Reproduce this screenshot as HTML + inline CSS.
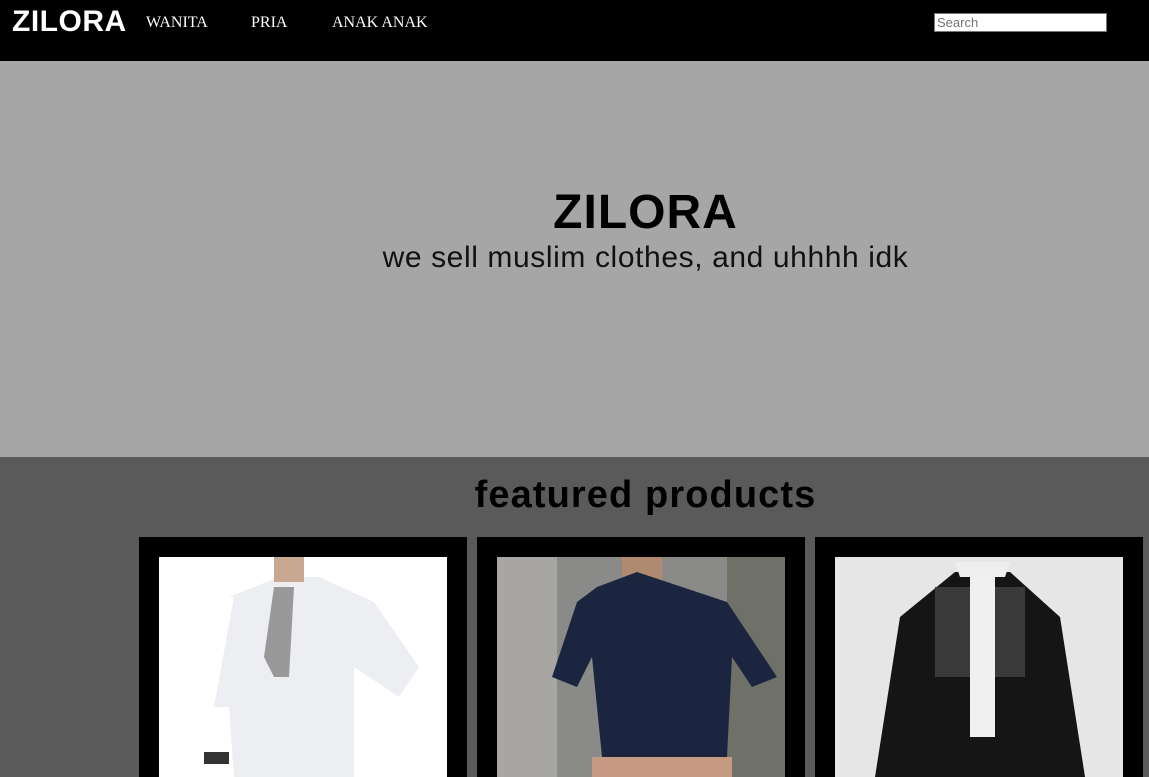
<!DOCTYPE html>
<html><head><meta charset="utf-8"><style>
*{margin:0;padding:0;box-sizing:border-box}
body{width:1149px;height:768px;overflow:hidden;background:#5a5a5a;font-family:"Liberation Sans",sans-serif}
.hdr{position:absolute;left:0;top:0;width:1149px;height:61px;background:#000}
.logo{position:absolute;left:12px;top:5px;color:#fff;font-weight:bold;font-size:30px;letter-spacing:0.5px}
.nav{position:absolute;top:14px;color:#fff;font-family:"Liberation Serif",serif;font-size:16px}
.search{position:absolute;left:934px;top:13px;width:173px;height:19px;background:#fff;border:1px solid #767676;font-size:13px;color:#757575;padding:1px 2px;line-height:15px}
.hero{position:absolute;left:0;top:61px;width:1149px;height:396px;background:#a6a6a6}
.h1{position:absolute;left:0;width:1291px;text-align:center;top:124px;font-size:48px;font-weight:bold;color:#000;letter-spacing:1px}
.h2{position:absolute;left:0;width:1291px;text-align:center;top:180px;font-size:30px;color:#111;letter-spacing:0.6px}
.fp{position:absolute;left:0;width:1291px;text-align:center;top:474px;font-size:38px;font-weight:bold;color:#000;letter-spacing:1.1px}
.card{position:absolute;top:537px;width:328px;height:240px;background:#000}
.img{position:absolute;left:20px;top:20px;width:288px;height:220px;overflow:hidden}
</style></head><body>
<div class="hdr">
<div class="logo">ZILORA</div>
<div class="nav" style="left:146px">WANITA</div>
<div class="nav" style="left:251px">PRIA</div>
<div class="nav" style="left:332px">ANAK ANAK</div>
<div class="search">Search</div>
</div>
<div class="hero"><div class="h1">ZILORA</div><div class="h2">we sell muslim clothes, and uhhhh idk</div></div>
<div class="fp">featured products</div>
<div class="card" style="left:139px"><div class="img" style="background:#fff">
<svg width="288" height="220"><path d="M70 40 L120 20 L160 20 L215 45 L260 110 L240 140 L195 110 L195 220 L75 220 L70 150 L55 150 L75 40Z" fill="#eceef2"/><path d="M115 30 L135 30 L130 120 L115 120 L105 100Z" fill="#999"/><rect x="115" y="0" width="30" height="25" fill="#c8a890"/><rect x="45" y="195" width="25" height="12" fill="#333"/></svg>
</div></div>
<div class="card" style="left:477px"><div class="img" style="background:#8a8a88">
<svg width="288" height="220"><rect x="0" y="0" width="60" height="220" fill="#a8a6a2"/><rect x="230" y="0" width="58" height="220" fill="#6f7068"/><rect x="125" y="0" width="40" height="25" fill="#b08a70"/><path d="M100 30 L140 15 L185 30 L230 45 L280 120 L255 130 L235 100 L230 200 L105 200 L95 100 L80 130 L55 120 L80 45Z" fill="#1c2540"/><rect x="95" y="200" width="140" height="20" fill="#c59a80"/></svg>
</div></div>
<div class="card" style="left:815px"><div class="img" style="background:#e6e6e6">
<svg width="288" height="220"><path d="M65 60 L120 15 L175 15 L225 60 L250 220 L40 220Z" fill="#151515"/><rect x="100" y="30" width="90" height="90" fill="#3a3a3a"/><rect x="135" y="10" width="25" height="170" fill="#f0f0f0"/><path d="M120 5 L175 5 L170 20 L125 20Z" fill="#eee"/></svg>
</div></div>
</body></html>
